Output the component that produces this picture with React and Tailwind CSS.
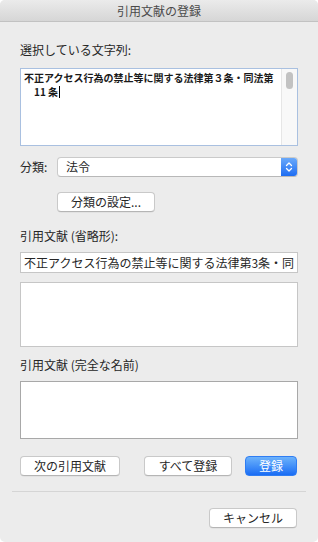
import React from 'react';

const font = { fontFamily: '"Noto Sans CJK JP", "Noto Sans", sans-serif' };

const PushButton = ({ children, className = '' }) => (
  <button
    className={`h-[20px] rounded-[4px] border border-[#c9c9c9] border-b-[#b5b5b5] bg-white text-[12px] leading-none text-[#262626] shadow-[0_0.5px_0.5px_rgba(0,0,0,0.08)] ${className}`}
  >
    {children}
  </button>
);

const App = () => {
  return (
    <div className="w-[318px] h-[542px] bg-white" style={font}>
      <div className="h-full flex flex-col overflow-hidden rounded-[5px] bg-[#ececec]">
        {/* title bar */}
        <div className="h-[22px] shrink-0 flex items-center justify-center border-b border-[#c2c2c2] bg-gradient-to-b from-[#ebebeb] to-[#d6d6d6]">
          <span className="text-[12px] leading-none text-[#4a4a4a]">引用文献の登録</span>
        </div>

        <div className="flex flex-col px-[20px]">
          <div className="mt-[20px] h-[16px] text-[12px] leading-[16px] text-[#262626]">選択している文字列:</div>

          <div className="mt-[10px] h-[78px] flex border border-[#a9c0e0] bg-white">
            <div className="flex-1 pl-[3px] pt-[2px] text-[10px] leading-[14px] font-bold text-[#1a1a1a]">
              <div className="whitespace-nowrap">不正アクセス行為の禁止等に関する法律第３条・同法第</div>
              <div className="pl-[10px] flex items-center">
                <span>11 条</span>
                <span className="ml-[1px] inline-block w-[1px] h-[12px] bg-black" />
              </div>
            </div>
            <div className="w-[16px] shrink-0 border-l border-[#e6e6e6] bg-[#f8f8f8] flex justify-center pt-[3px]">
              <div className="w-[7px] h-[17px] rounded-full bg-[#c2c2c2]" />
            </div>
          </div>

          <div className="mt-[11px] flex items-center">
            <span className="w-[37px] text-[12px] leading-none text-[#262626]">分類:</span>
            <div className="flex-1 h-[20px] flex rounded-[4px] border border-[#cacaca] border-b-[#b8b8b8] bg-white overflow-hidden">
              <span className="flex-1 pl-[8px] text-[12px] leading-[18px] text-[#262626]">法令</span>
              <div className="w-[16px] flex items-center justify-center bg-gradient-to-b from-[#6aa9fa] to-[#1c6cf2]">
                <svg width="8" height="12" viewBox="0 0 8 12" fill="none" stroke="white" strokeWidth="1.3" strokeLinecap="round" strokeLinejoin="round">
                  <path d="M1.5 4.5 L4 2 L6.5 4.5" />
                  <path d="M1.5 7.5 L4 10 L6.5 7.5" />
                </svg>
              </div>
            </div>
          </div>

          <div className="mt-[11px] pl-[37px]">
            <PushButton className="w-[98px]">分類の設定...</PushButton>
          </div>

          <div className="mt-[16px] h-[16px] text-[12px] leading-[16px] text-[#262626]">引用文献 (省略形):</div>

          <div className="mt-[8px] h-[21px] border border-[#c6c6c6] bg-white overflow-hidden">
            <div className="pl-[3px] whitespace-nowrap text-[12px] leading-[19px] text-[#262626]">
              不正アクセス行為の禁止等に関する法律第3条・同
            </div>
          </div>

          <div className="mt-[9px] h-[65px] border border-[#c6c6c6] bg-white" />

          <div className="mt-[10px] h-[16px] text-[12px] leading-[16px] text-[#262626]">引用文献 (完全な名前)</div>

          <div className="mt-[8px] h-[58px] border border-[#a8a8a8] bg-white" />

          <div className="mt-[17px] flex items-center">
            <PushButton className="w-[100px]">次の引用文献</PushButton>
            <PushButton className="ml-[24px] w-[88px]">すべて登録</PushButton>
            <button className="ml-[13px] w-[52px] h-[20px] rounded-[4px] border border-[#2f7df3] bg-gradient-to-b from-[#6cb2fb] to-[#196cf4] text-[12px] leading-none text-white">
              登録
            </button>
          </div>

          <div className="mt-[15px] -mx-[8px] h-[1px] bg-[#d5d5d5]" />

          <div className="mt-[16px] flex justify-end pr-[1px]">
            <PushButton className="w-[88px]">キャンセル</PushButton>
          </div>
        </div>
      </div>
    </div>
  );
};

export default App;
